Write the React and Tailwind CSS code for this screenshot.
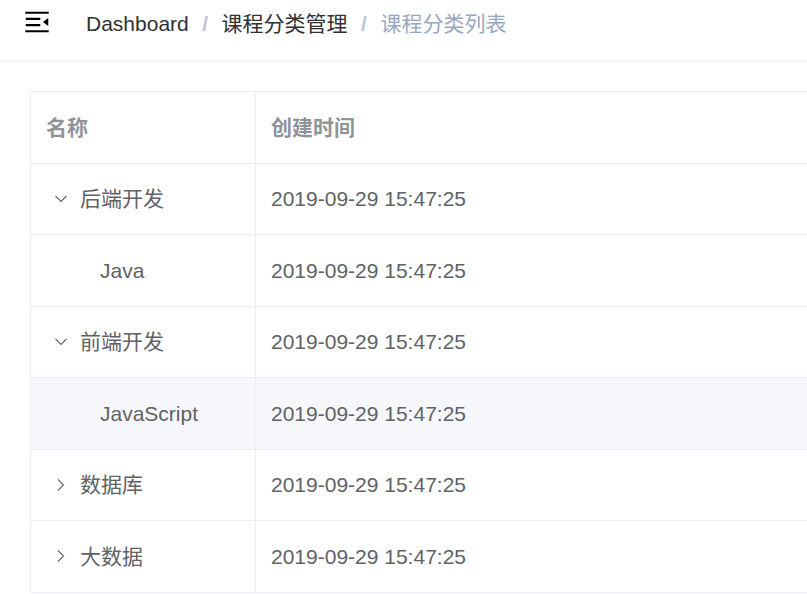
import React from 'react';

const ROWS = [
  { name: '后端开发', level: 0, icon: 'down' },
  { name: 'Java', level: 1 },
  { name: '前端开发', level: 0, icon: 'down' },
  { name: 'JavaScript', level: 1, hover: true },
  { name: '数据库', level: 0, icon: 'right' },
  { name: '大数据', level: 0, icon: 'right' },
];

const Hamburger = () => (
  <svg viewBox="0 0 1024 1024" width="30" height="30" className="rotate-180 fill-black">
    <path d="M408 442h480c4.4 0 8-3.6 8-8v-56c0-4.4-3.6-8-8-8H408c-4.4 0-8 3.6-8 8v56c0 4.4 3.6 8 8 8zm-8 204c0 4.4 3.6 8 8 8h480c4.4 0 8-3.6 8-8v-56c0-4.4-3.6-8-8-8H408c-4.4 0-8 3.6-8 8v56zm504-486H120c-4.4 0-8 3.6-8 8v56c0 4.4 3.6 8 8 8h784c4.4 0 8-3.6 8-8v-56c0-4.4-3.6-8-8-8zm0 632H120c-4.4 0-8 3.6-8 8v56c0 4.4 3.6 8 8 8h784c4.4 0 8-3.6 8-8v-56c0-4.4-3.6-8-8-8zM142.4 642.1L298.7 519a8.84 8.84 0 0 0 0-13.9L142.4 381.9c-5.8-4.6-14.4-.5-14.4 6.9v246.3a8.8 8.8 0 0 0 14.4 7z" />
  </svg>
);

const Chevron = ({ dir }) => (
  <svg width="12" height="12" viewBox="0 0 12 12" fill="none" stroke="#666" strokeWidth="1.1">
    {dir === 'down' ? (
      <polyline points="0.5,3 6,8.5 11.5,3" />
    ) : (
      <polyline points="3,0.5 8.5,6 3,11.5" />
    )}
  </svg>
);

export default function App() {
  return (
    <div className="w-[807px] h-[594px] overflow-hidden bg-white font-['Liberation_Sans','Noto_Sans_CJK_SC',sans-serif]">
      {/* Navbar */}
      <div className="h-[60px] flex items-start shadow-[0_1px_4px_rgba(0,21,41,0.08)]">
        <div className="ml-[22px] mt-[7px]">
          <Hamburger />
        </div>
        <div className="ml-[34px] flex items-center leading-[48px] text-[21px]">
          <span className="text-[#303133]">Dashboard</span>
          <span className="mx-[13.5px] font-bold text-[#c0c4cc]">/</span>
          <span className="text-[#303133]">课程分类管理</span>
          <span className="mx-[13.5px] font-bold text-[#c0c4cc]">/</span>
          <span className="text-[#97a8be]">课程分类列表</span>
        </div>
      </div>

      {/* Table */}
      <div className="pl-[30px] pt-[31px]">
        <div className="w-[1000px] border-l border-t border-[#ebeef5] text-[21px]">
          <div className="grid grid-cols-[225px_1fr] h-[71.5px] border-b border-[#ebeef5] font-bold text-[#909399]">
            <div className="flex items-center pl-[15px] border-r border-[#ebeef5]">名称</div>
            <div className="flex items-center pl-[15px]">创建时间</div>
          </div>
          {ROWS.map((row) => (
            <div
              key={row.name}
              className={`grid grid-cols-[225px_1fr] h-[71.5px] border-b border-[#ebeef5] text-[#606266] ${row.hover ? 'bg-[#f5f7fa]' : 'bg-white'}`}
            >
              <div className="flex items-center pl-[15px] border-r border-[#ebeef5]">
                {row.level === 1 && <span className="w-[54px] shrink-0" />}
                {row.icon && (
                  <span className="w-[30px] mr-[4px] flex items-center justify-center shrink-0">
                    <Chevron dir={row.icon} />
                  </span>
                )}
                <span>{row.name}</span>
              </div>
              <div className="flex items-center pl-[15px]">2019-09-29 15:47:25</div>
            </div>
          ))}
        </div>
      </div>
    </div>
  );
}
